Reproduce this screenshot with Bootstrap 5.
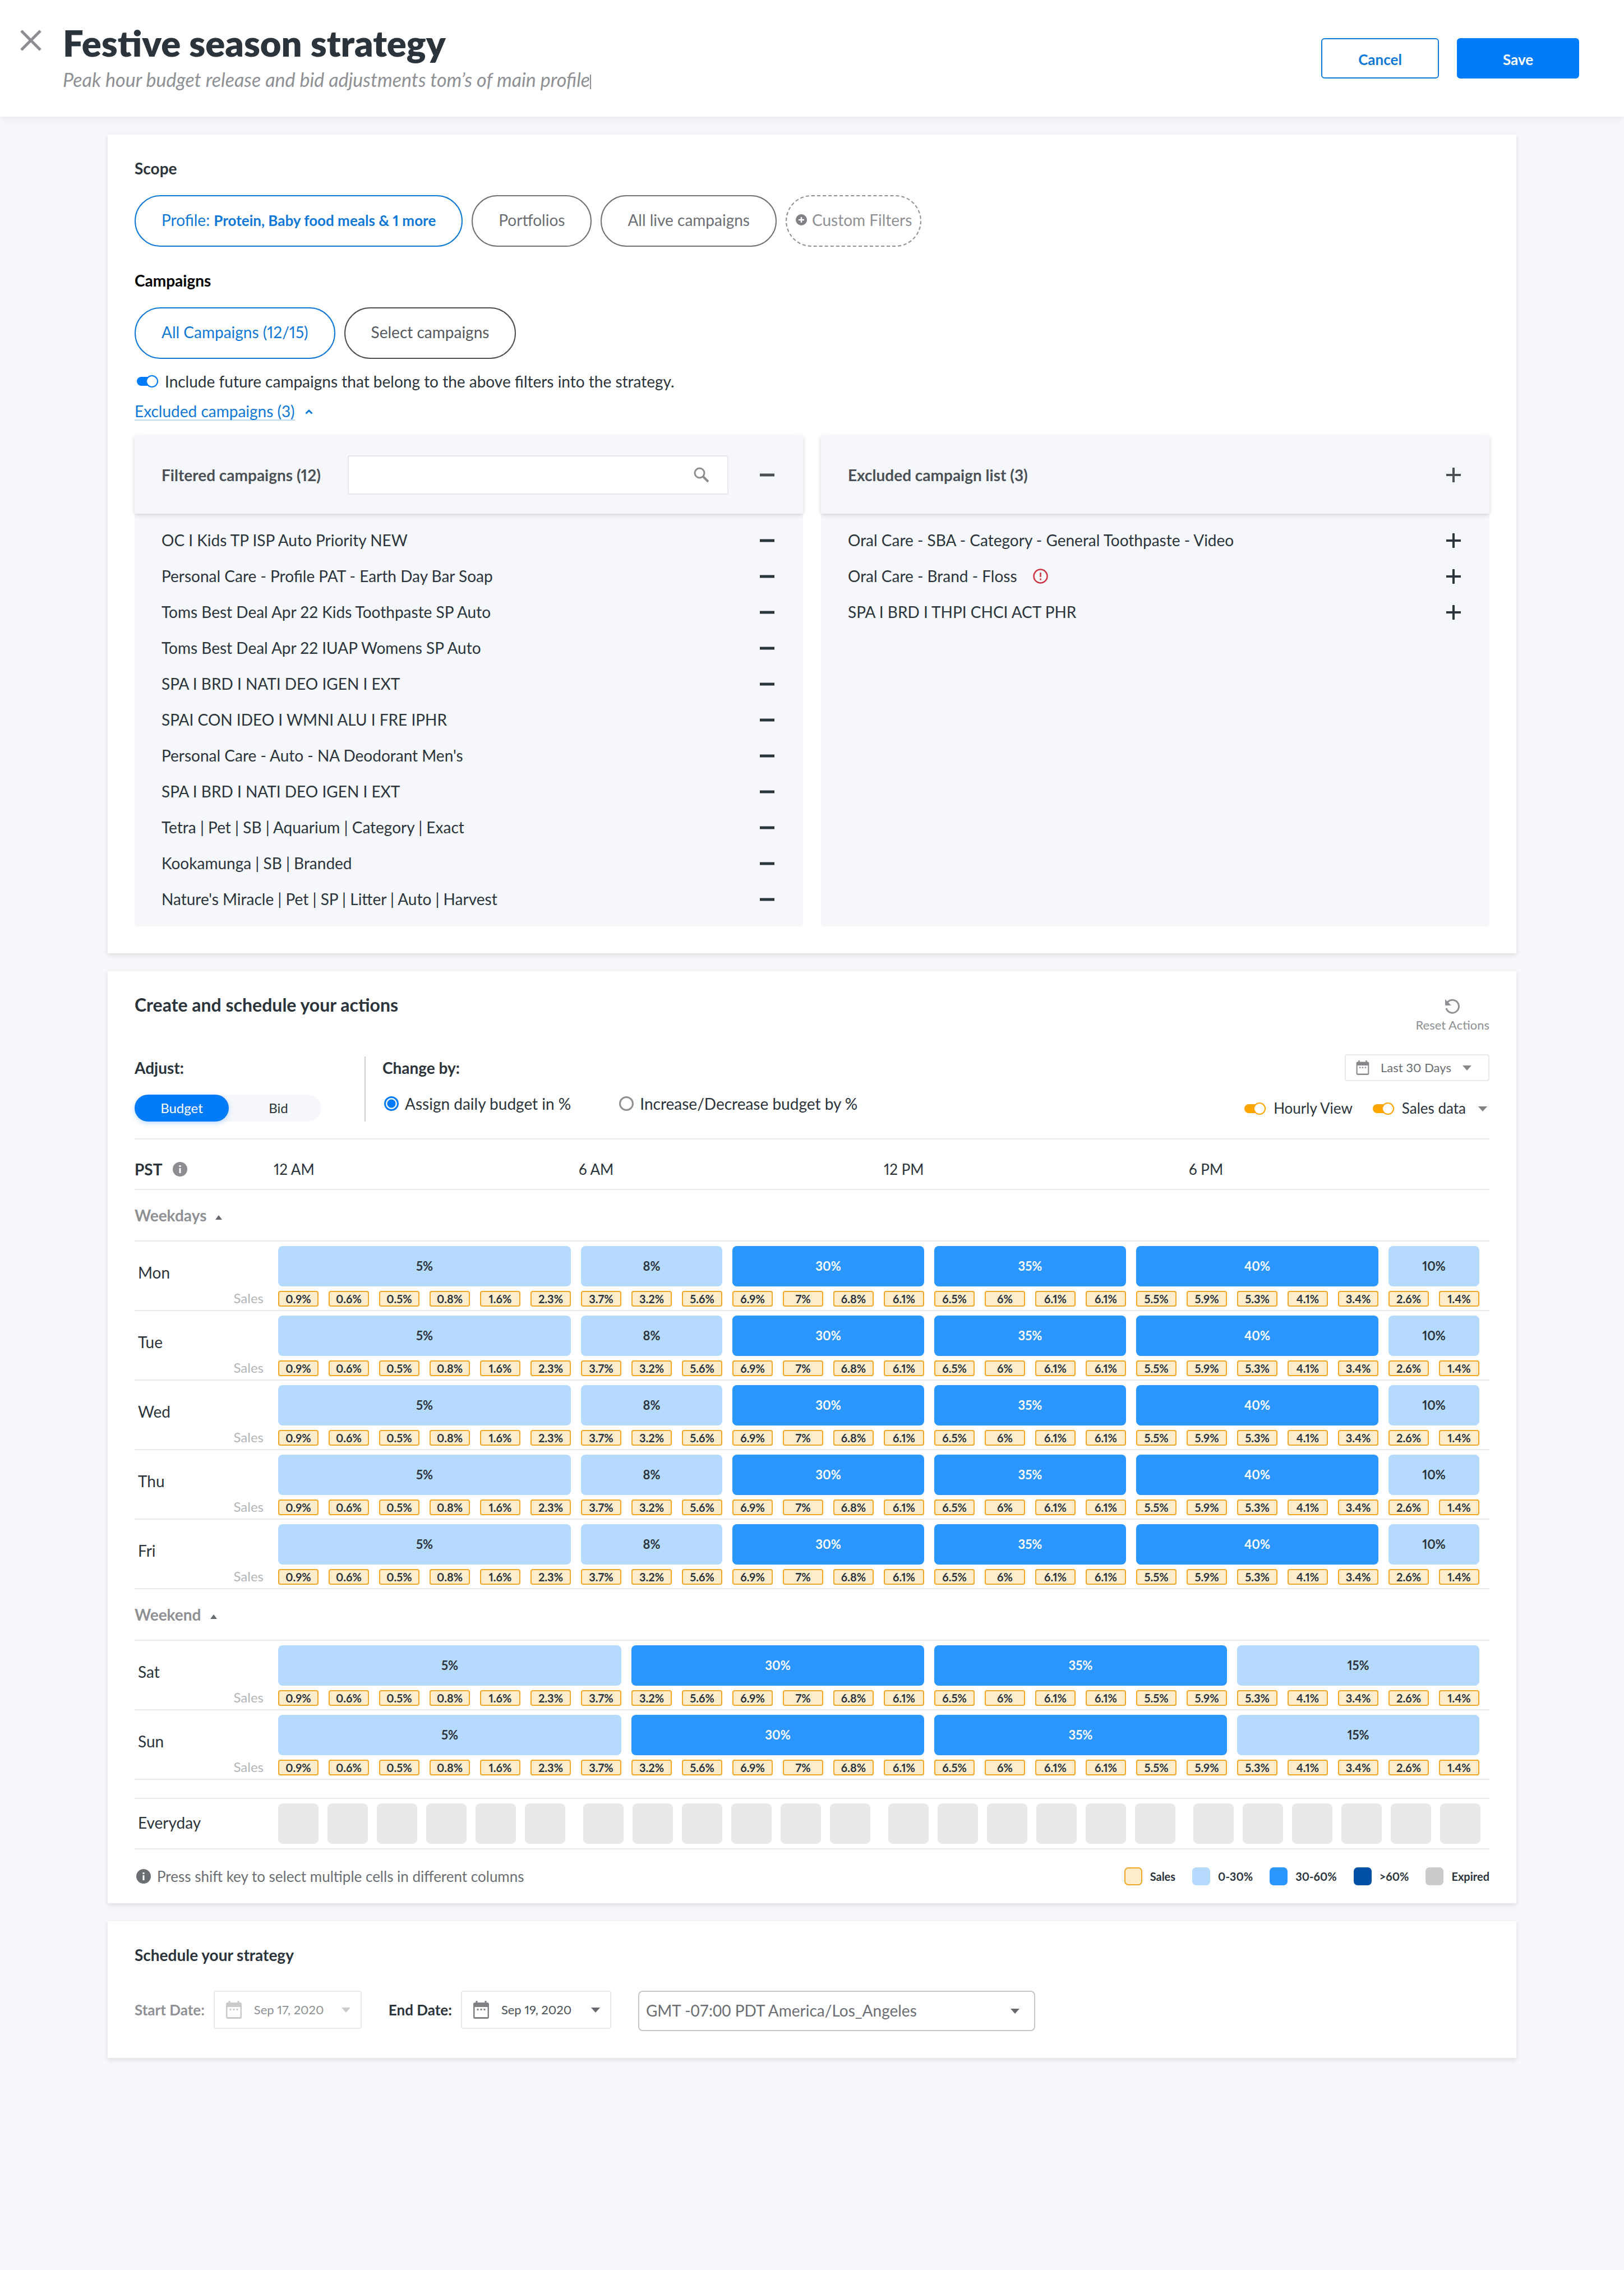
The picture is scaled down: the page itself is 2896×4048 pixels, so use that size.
<!DOCTYPE html>
<html lang="en">
<head>
<meta charset="utf-8">
<meta name="viewport" content="width=device-width, initial-scale=1">
<title>Festive season strategy</title>
<link href="https://cdn.jsdelivr.net/npm/bootstrap@5.3.0/dist/css/bootstrap.min.css" rel="stylesheet">
<style>
  :root { --ink: #2b333b; --soft: #6b6e72; --mute: #8e9094; --brand: #007bf9; --brand-line: #0f78d6; --rule: #e8e9ea; --amber: #f0a827; --low: #b6dafe; --mid: #2c96ff; --high: #0050a5; }
  body { background: #f5f7fb; color: var(--ink); font: 400 28px/40px Lato, "Open Sans", sans-serif; font-variant-numeric: proportional-nums; }
  svg { flex: none; display: block; }
  h1 { font-size: 65px; line-height: 72px; font-weight: 800; margin: 0; }
  h2, h3 { font-size: 28px; line-height: 40px; font-weight: 700; margin: 0; }
  h2.title-lg { font-size: 32px; }
  .fw-semi { font-weight: 700; }
  button { font: inherit; font-variant-numeric: inherit; color: inherit; background: none; border: 0; padding: 0; }

  .page-head { background: #fff; height: 208px; padding: 40px 80px 0 36px; box-shadow: 0 4px 12px rgba(0, 0, 0, .06); }
  .close-btn { margin: 13px 38px 0 0; }
  .subtitle { color: var(--mute); font-size: 34px; font-style: italic; margin: 10px 0 0; }
  .caret { display: inline-block; width: 2px; height: 26px; background: var(--mute); vertical-align: -4px; }
  .head-btn { --bs-btn-font-size: 26px; --bs-btn-font-weight: 700; --bs-btn-border-width: 2px; --bs-btn-border-radius: 6px; height: 72px; width: 210px; line-height: 40px; padding-top: 10px; }
  .head-btn.btn-primary { --bs-btn-bg: var(--brand); --bs-btn-border-color: var(--brand); width: 218px; }
  .head-btn.btn-outline-primary { --bs-btn-color: var(--brand-line); --bs-btn-border-color: var(--brand-line); }

  .page-main { padding: 32px 192px 64px; }
  .panel { background: #fff; box-shadow: 0 3px 8px rgba(0, 0, 0, .11); padding: 40px 48px 48px; }

  .pill { height: 92px; padding: 0 46px 4px; border: 2px solid #707275; border-radius: 46px; color: var(--soft); }
  .pill b { font-size: 26px; }
  .pill.dark { border-color: #4c4f53; color: #55585c; }
  .pill.on { border-color: var(--brand-line); color: var(--brand-line); }
  .pill.dashed { border: 2px dashed var(--mute); color: var(--mute); padding: 0 15px 4px; }

  .flip { appearance: none; margin: 0 8px 0 0; width: 38px; height: 16px; border-radius: 8px; background: var(--flip); display: flex; align-items: center; justify-content: flex-end; flex: none; }
  .flip::before { content: ""; flex: none; width: 22px; height: 22px; border: 2px solid var(--flip); border-radius: 50%; background: #fff; }
  .flip.blue { --flip: #007bf9; }
  .flip.amber { --flip: #ffa500; }
  .view-flips { margin-top: 28px; padding-right: 4px; font-size: 26px; }
  .view-flips label { padding-left: 6px; padding-bottom: 2px; }
  .ex-link { color: var(--brand-line); text-decoration: none; }
  .ex-link:hover { color: var(--brand); }
  .ex-link span { border-bottom: 2px solid #b9d9f5; line-height: 30px; }

  .camp-head { height: 138px; background: #f5f7fb; box-shadow: 0 2px 8px rgba(0, 0, 0, .16); padding: 0 51px 0 48px; position: relative; border-radius: 4px; color: #4b5056; font-weight: 700; }
  .camp-list { background: #f5f7fb; padding: 16px 51px 16px 48px; margin: 0; border-radius: 0 0 6px 6px; flex: 1; }
  .camp-list li { height: 64px; }
  .camp-list li > span { padding-bottom: 2px; }
  .search { margin: 0 56px 0 48px; flex: 1; height: 70px; background: #fff; border: 2px solid var(--rule); border-radius: 4px; padding-right: 32px; }
  .search input { flex: 1; min-width: 0; height: 100%; border: 0; background: none; padding: 0 20px; outline: 0; }

  .reset { color: var(--mute); font-size: 22px; line-height: 40px; padding-top: 8px; }
  .controls { margin-top: 36px; height: 120px; }
  .adjust { width: 412px; border-right: 2px solid #cfd1d3; margin-top: 4px; height: 116px; }
  .seg { width: 333px; height: 48px; border-radius: 24px; background: #f5f7fb; font-size: 24px; margin-top: 28px; }
  .seg button { flex: 1; padding-left: 12px; }
  .seg .on { flex: none; width: 168px; height: 48px; padding: 0; border-radius: 24px; background: var(--brand); color: #fff; box-shadow: 0 3px 8px rgba(0, 123, 249, .25); }
  .dot { appearance: none; width: 26px; height: 26px; border: 3px solid var(--mute); border-radius: 50%; margin: 0 11px 0 0; flex: none; }
  .dot:checked { border-color: var(--brand); background: radial-gradient(circle, var(--brand) 7px, #fff 8px); }
  .picker { border: 2px solid var(--rule); border-radius: 4px; padding: 0 18px 0 20px; height: 68px; font-size: 22px; background: #fff; }
  .picker.off { color: #8f9194; }
  .picker.off svg { color: #c9cacc; }
  .range { height: 48px; width: 258px; padding: 0 30px 0 18px; color: var(--soft); }
  .range svg { color: #85878a; }

  .hours { border-top: 2px solid var(--rule); height: 90px; margin-top: 30px; padding-top: 18px; }
  .hour-grid { flex: 1; display: grid; grid-template-columns: repeat(4, 1fr); column-gap: 32px; padding-right: 24px; font-size: 26px; }
  .hours .zone { width: 248px; }
  .plan { width: 100%; table-layout: fixed; border-collapse: separate; border-spacing: 0; border-bottom: 2px solid var(--rule); }
  .plan th { font-weight: 400; padding: 0; }
  .plan .c-day { width: 160px; } .plan .c-tag { width: 96px; }
  .plan .group th { height: 92px; border-top: 2px solid var(--rule); color: var(--mute); font-weight: 700; }
  .plan .bars > * { border-top: 2px solid var(--rule); }
  .plan .bars td { padding: 8px 18px 0 0; }
  .plan .bars th { padding: 0 0 12px 6px; }
  .plan .sales td { padding: 8px 18px 6px 0; }
  .plan .sales th { color: #b3b5b8; font-size: 24px; line-height: 28px; padding: 0 26px 0 0; text-align: right; }
  .bar { display: block; width: 100%; height: 72px; border-radius: 8px; font-size: 22px; font-weight: 700; background: var(--low); }
  .bar.mid { background: var(--mid); color: #fff; }
  .chip { height: 28px; border: 2px solid var(--amber); border-radius: 4px; background: #feedcb; font-size: 20px; line-height: 24px; font-weight: 700; text-align: center; }
  .every { border: solid var(--rule); border-width: 2px 0; margin-top: 32px; padding: 8px 16px 8px 6px; }
  .every .every-name { width: 250px; padding-bottom: 4px; }
  .every-grid { flex: 1; display: grid; grid-template-columns: repeat(4, 1fr); column-gap: 32px; }
  .six { display: grid; grid-template-columns: repeat(6, 1fr); column-gap: 16px; }
  .six button { height: 72px; border-radius: 8px; background: #e9e9eb; }
  .legend { font-size: 20px; line-height: 32px; font-weight: 700; gap: 30px; }
  .legend span { display: flex; gap: 14px; }
  .legend i { width: 32px; height: 32px; border-radius: 7px; }
  .hint { color: var(--soft); font-size: 26px; line-height: 30px; }
  .date-label { font-size: 26px; font-weight: 700; }
  .zone-select { width: 708px; height: 72px; border: 2px solid #c5c7c9; border-radius: 8px; color: var(--soft); padding: 0 12px 2px; font-size: 28px; line-height: 40px; background-color: #fff; background-size: 16px 9px; background-position: right 26px center; background-image: url("data:image/svg+xml,%3Csvg xmlns='http://www.w3.org/2000/svg' viewBox='0 0 16 9'%3E%3Cpath fill='%2366696d' d='M0 0h16L8 9z'/%3E%3C/svg%3E"); }
</style>
</head>
<body>
<svg width="0" height="0" class="position-absolute" aria-hidden="true">
  <symbol id="minus" viewBox="0 0 26 26"><path d="M0 13h26" stroke="currentColor" stroke-width="5"/></symbol>
  <symbol id="plus" viewBox="0 0 26 26"><path d="M0 13h26M13 0v26" stroke="currentColor" stroke-width="4"/></symbol>
  <symbol id="down" viewBox="0 0 16 9"><path d="M0 0h16L8 9z" fill="currentColor"/></symbol>
  <symbol id="up" viewBox="0 0 12 8"><path d="M0 8h12L6 0z" fill="currentColor"/></symbol>
  <symbol id="info" viewBox="0 0 26 26"><circle cx="13" cy="13" r="13" fill="currentColor"/><path d="M13 11v9M13 6v3" stroke="#fff" stroke-width="3"/></symbol>
  <symbol id="cal" viewBox="0 0 28 32"><path fill="currentColor" fill-rule="evenodd" d="M4.500 0h3v3h13V0h3v3H25a3 3 0 0 1 3 3v23a3 3 0 0 1-3 3H3a3 3 0 0 1-3-3V6a3 3 0 0 1 3-3h1.500zM2.500 11v18h23V11zM6.500 14h3v3h-3zM12.500 14h3v3h-3zM18.500 14h3v3h-3z"/></symbol>
</svg>

<header class="page-head d-flex align-items-start">
  <button type="button" class="close-btn" aria-label="Close"><svg width="38" height="38" viewBox="0 0 38 38" stroke="#8b8d90" stroke-width="5"><path d="M2 2l34 34M36 2L2 36"/></svg></button>
  <div class="flex-grow-1">
    <h1>Festive season strategy</h1>
    <p class="subtitle">Peak hour budget release and bid adjustments tom’s of main profile<span class="caret"></span></p>
  </div>
  <div class="d-flex mt-4 pt-1" style="gap:32px">
    <button type="button" class="btn btn-outline-primary head-btn">Cancel</button>
    <button type="button" class="btn btn-primary head-btn">Save</button>
  </div>
</header>

<main class="page-main d-flex flex-column" style="gap:32px">
  <section class="panel">
    <h2>Scope</h2>
    <div class="d-flex gap-3" style="margin-top:28px">
      <button type="button" class="pill on">Profile: <b>Protein, Baby food meals &amp; 1 more</b></button>
      <button type="button" class="pill">Portfolios</button>
      <button type="button" class="pill">All live campaigns</button>
      <button type="button" class="pill dashed d-flex align-items-center gap-2"><svg width="22" height="22" viewBox="0 0 22 22"><circle cx="11" cy="11" r="10" fill="#7f8185"/><path d="M11 6v10M6 11h10" stroke="#fff" stroke-width="2.500"/></svg>Custom Filters</button>
    </div>
    <h2 class="text-black" style="margin-top:40px">Campaigns</h2>
    <div class="d-flex gap-3" style="margin-top:28px">
      <button type="button" class="pill on">All Campaigns (12/15)</button>
      <button type="button" class="pill dark">Select campaigns</button>
    </div>
    <div class="d-flex align-items-center ps-1" style="margin-top:20px">
      <input type="checkbox" id="future" class="flip blue" checked>
      <label for="future" class="ps-1">Include future campaigns that belong to the above filters into the strategy.</label>
    </div>
    <a href="#excluded" class="ex-link d-flex align-items-center" style="margin-top:14px;gap:18px;height:40px"><span>Excluded campaigns (3)</span><svg width="14" height="10" viewBox="0 0 14 10" fill="none" stroke="currentColor" stroke-width="3"><path d="M1.500 8.500L7 3l5.500 5.500"/></svg></a>

    <div class="d-flex" id="excluded" style="margin-top:24px;gap:32px">
      <div class="d-flex flex-column" style="flex:1 1 0">
        <div class="camp-head d-flex align-items-center">
          <label for="find">Filtered campaigns (12)</label>
          <div class="search d-flex align-items-center"><input type="search" id="find"><svg width="28" height="28" viewBox="0 0 28 28" fill="none" stroke="#8b8d90" stroke-width="3"><circle cx="10.500" cy="10.500" r="8.500"/><path d="M17 17l9 9" stroke-width="4"/></svg></div>
          <button type="button" aria-label="Exclude all"><svg width="26" height="26"><use href="#minus"/></svg></button>
        </div>
        <ul class="camp-list list-unstyled" id="filtered"></ul>
      </div>
      <div class="d-flex flex-column" style="flex:1 1 0">
        <div class="camp-head d-flex align-items-center justify-content-between">
          <span>Excluded campaign list (3)</span>
          <button type="button" aria-label="Include all"><svg width="26" height="26"><use href="#plus"/></svg></button>
        </div>
        <ul class="camp-list list-unstyled" id="removed"></ul>
      </div>
    </div>
  </section>

  <section class="panel" style="padding-bottom:32px">
    <div class="d-flex justify-content-between" style="height:72px">
      <h2 class="title-lg">Create and schedule your actions</h2>
      <button type="button" class="reset d-flex flex-column align-items-center"><svg width="28" height="28" viewBox="0 0 28 28" fill="none" stroke="currentColor" stroke-width="3"><path d="M5 7.500A11.500 11.500 0 1 1 3 18"/><path d="M1 2v11h11z" fill="currentColor" stroke="none"/></svg>Reset Actions</button>
    </div>
    <div class="controls d-flex">
      <div class="adjust">
        <h3>Adjust:</h3>
        <div class="seg d-flex" role="group"><button type="button" class="on">Budget</button><button type="button">Bid</button></div>
      </div>
      <div class="flex-grow-1" style="padding:4px 0 0 30px">
        <h3>Change by:</h3>
        <div class="d-flex mt-4" style="gap:86px">
          <div class="d-flex align-items-center" style="padding-left:3px"><input type="radio" name="mode" id="m1" class="dot" checked><label for="m1">Assign daily budget in %</label></div>
          <div class="d-flex align-items-center"><input type="radio" name="mode" id="m2" class="dot"><label for="m2">Increase/Decrease budget by %</label></div>
        </div>
      </div>
      <div class="d-flex flex-column align-items-end">
        <button type="button" class="picker range d-flex align-items-center justify-content-between"><svg width="24" height="26"><use href="#cal"/></svg>Last 30 Days<svg width="16" height="9"><use href="#down"/></svg></button>
        <div class="view-flips d-flex align-items-center">
          <input type="checkbox" id="hourly" class="flip amber" checked><label for="hourly">Hourly View</label>
          <input type="checkbox" id="sales" class="flip amber" style="margin-left:36px" checked><label for="sales" style="padding-right:22px">Sales data</label>
          <svg width="16" height="9" color="#7f8185"><use href="#down"/></svg>
        </div>
      </div>
    </div>

    <div class="hours d-flex align-items-center">
      <div class="zone d-flex align-items-center"><span class="fw-semi">PST</span><svg width="26" height="26" color="#8b8d90" style="margin-left:18px"><use href="#info"/></svg></div>
      <div class="hour-grid"><span>12 AM</span><span>6 AM</span><span>12 PM</span><span>6 PM</span></div>
    </div>
    <table class="plan"><colgroup><col class="c-day"><col class="c-tag"><col span="24"></colgroup><tbody id="plan"></tbody></table>
    <div class="every d-flex align-items-center">
      <div class="every-name">Everyday</div>
      <div class="every-grid" id="every"></div>
    </div>
    <div class="d-flex justify-content-between" style="margin-top:32px">
      <div class="hint d-flex align-items-center" style="gap:11px;padding-left:3px"><svg width="26" height="26"><use href="#info"/></svg>Press shift key to select multiple cells in different columns</div>
      <div class="legend d-flex">
        <span><i style="background:#feedcb;border:2px solid var(--amber)"></i>Sales</span>
        <span><i style="background:var(--low)"></i>0-30%</span>
        <span><i style="background:var(--mid)"></i>30-60%</span>
        <span><i style="background:var(--high)"></i>&gt;60%</span>
        <span><i style="background:#cacbcd"></i>Expired</span>
      </div>
    </div>
  </section>

  <section class="panel">
    <h2>Schedule your strategy</h2>
    <div class="d-flex align-items-start" style="margin-top:44px;gap:48px">
      <div class="d-flex align-items-center" style="gap:16px"><label for="from" class="date-label" style="color:#8e9094">Start Date:</label>
        <button type="button" id="from" class="picker off d-flex align-items-center" disabled style="width:264px"><svg width="28" height="32"><use href="#cal"/></svg><span class="flex-grow-1 text-start" style="padding-left:22px">Sep 17, 2020</span><svg width="16" height="9"><use href="#down"/></svg></button></div>
      <div class="d-flex align-items-center" style="gap:16px"><label for="until" class="date-label">End Date:</label>
        <button type="button" id="until" class="picker d-flex align-items-center" style="width:268px;color:#4b5056"><svg width="28" height="32" color="#7f8185"><use href="#cal"/></svg><span class="flex-grow-1 text-start" style="padding-left:22px">Sep 19, 2020</span><svg width="16" height="9" color="#66696d"><use href="#down"/></svg></button></div>
      <select class="form-select zone-select" aria-label="Time zone"><option>GMT -07:00 PDT America/Los_Angeles</option></select>
    </div>
  </section>
</main>

<script src="https://cdn.jsdelivr.net/npm/bootstrap@5.3.0/dist/js/bootstrap.bundle.min.js"></script>
<script>
  const row = (name, icon, extra = '') => `<li class="d-flex align-items-center justify-content-between"><span class="d-flex align-items-center">${name}${extra}</span><button type="button" aria-label="${icon}"><svg width="26" height="26"><use href="#${icon}"/></svg></button></li>`;
  const alertIcon = '<svg width="27" height="27" viewBox="0 0 27 27" fill="none" stroke="#cf3341" stroke-width="2.500" style="margin-left:28px"><circle cx="13.500" cy="13.500" r="12"/><path d="M13.500 7v8M13.500 17.500v3"/></svg>';
  document.getElementById('filtered').innerHTML = ['OC I Kids TP ISP Auto Priority NEW', 'Personal Care - Profile PAT - Earth Day Bar Soap', 'Toms Best Deal Apr 22 Kids Toothpaste SP Auto', 'Toms Best Deal Apr 22 IUAP Womens SP Auto', 'SPA I BRD I NATI DEO IGEN I EXT', 'SPAI CON IDEO I WMNI ALU I FRE IPHR', "Personal Care - Auto - NA Deodorant Men's", 'SPA I BRD I NATI DEO IGEN I EXT', 'Tetra | Pet | SB | Aquarium | Category | Exact', 'Kookamunga | SB | Branded', "Nature's Miracle | Pet | SP | Litter | Auto | Harvest"].map(n => row(n, 'minus')).join('');
  document.getElementById('removed').innerHTML = row('Oral Care - SBA - Category - General Toothpaste - Video', 'plus') + row('Oral Care - Brand - Floss', 'plus', alertIcon) + row('SPA I BRD I THPI CHCI ACT PHR', 'plus');

  // Each slot is [hours covered, share of the daily budget].
  const weekday = [[6, 5], [3, 8], [4, 30], [4, 35], [5, 40], [2, 10]];
  const weekend = [[7, 5], [6, 30], [6, 35], [5, 15]];
  const sales = [0.9, 0.6, 0.5, 0.8, 1.6, 2.3, 3.7, 3.2, 5.6, 6.9, 7, 6.8, 6.1, 6.5, 6, 6.1, 6.1, 5.5, 5.9, 5.3, 4.1, 3.4, 2.6, 1.4];
  const group = (name, days, slots) => `<tr class="group"><th colspan="26"><button type="button">${name}<svg class="d-inline-block ms-3" width="12" height="8" color="#66696d" style="vertical-align:3px"><use href="#up"/></svg></button></th></tr>` +
    days.map(d => `<tr class="bars"><th rowspan="2" scope="rowgroup">${d}</th><td></td>${slots.map(([n, v]) => `<td colspan="${n}"><button type="button" class="bar${v >= 30 ? ' mid' : ''}">${v}%</button></td>`).join('')}</tr>
      <tr class="sales"><th scope="row">Sales</th>${sales.map(v => `<td><div class="chip">${v}%</div></td>`).join('')}</tr>`).join('');
  document.getElementById('plan').innerHTML = group('Weekdays', ['Mon', 'Tue', 'Wed', 'Thu', 'Fri'], weekday) + group('Weekend', ['Sat', 'Sun'], weekend);
  document.getElementById('every').innerHTML = Array.from({ length: 4 }, (_, g) => `<div class="six">${Array.from({ length: 6 }, (_, i) => `<button type="button" aria-label="Hour ${g * 6 + i}"></button>`).join('')}</div>`).join('');
</script>
</body>
</html>
